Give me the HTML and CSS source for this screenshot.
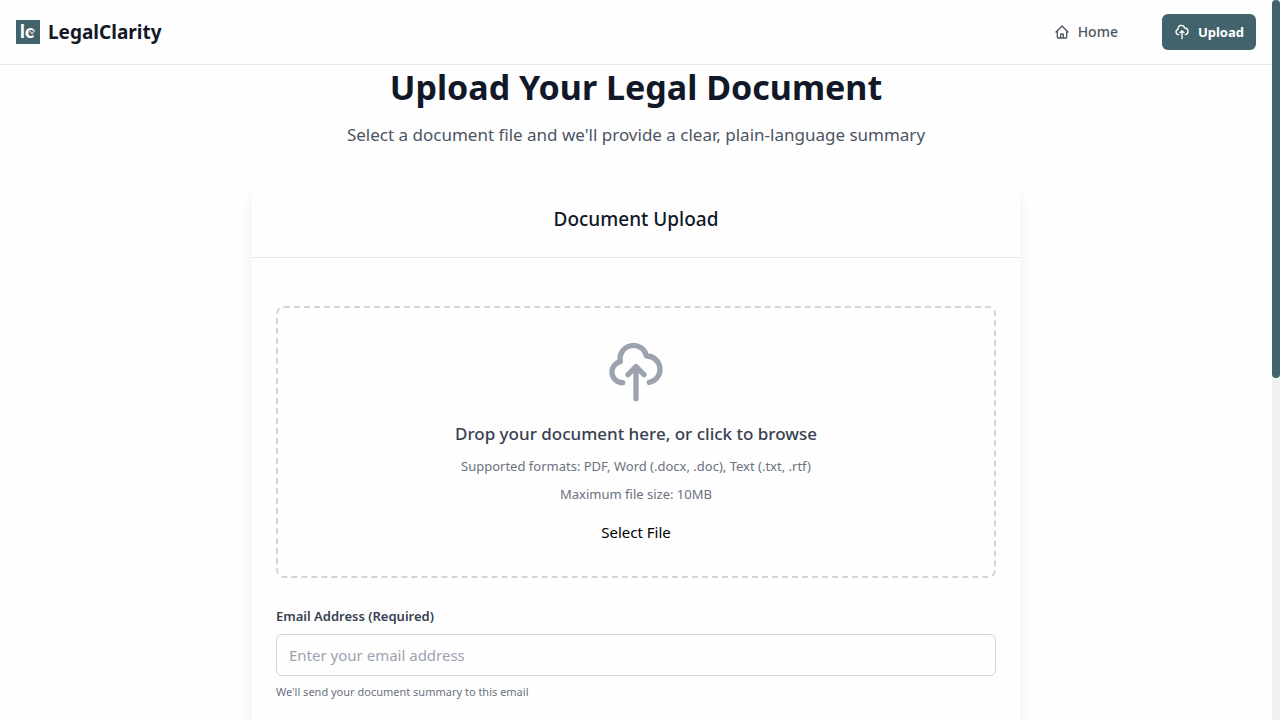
FILE: index.html
```html
<!DOCTYPE html>
<html lang="en">
<head>
    <meta charset="UTF-8">
    <meta name="viewport" content="width=device-width, initial-scale=1.0">
    <title>LegalClarity</title>
    <link rel="stylesheet" href="styles.css">
</head>
<body>
    <header class="navbar">
        <a class="brand" href="#">
            <svg class="brand-logo" viewBox="0 0 24 24" aria-hidden="true">
                <rect width="24" height="24" fill="#42636b"/>
                <text class="logo-text" x="4" y="18">l</text>
                <text class="logo-text" x="9" y="18">c</text>
                <path d="M14 11l2 3 3-4" fill="none" stroke="#fff" stroke-width="1"/>
            </svg>
            <span class="brand-name">LegalClarity</span>
        </a>
        <nav class="nav-links">
            <a class="nav-link" href="#">
                <svg class="icon" viewBox="0 0 24 24" aria-hidden="true">
                    <path d="M3 12l2-2m0 0l7-7 7 7M5 10v10a1 1 0 001 1h3m10-11l2 2m-2-2v10a1 1 0 01-1 1h-3m-6 0a1 1 0 001-1v-4a1 1 0 011-1h2a1 1 0 011 1v4a1 1 0 001 1m-6 0h6"/>
                </svg>
                Home
            </a>
            <a class="nav-link nav-link-active" href="#">
                <svg class="icon" viewBox="0 0 24 24" aria-hidden="true">
                    <path d="M7 16a4 4 0 01-.88-7.903A5 5 0 1115.9 6L16 6a5 5 0 011 9.9M15 13l-3-3m0 0l-3 3m3-3v12"/>
                </svg>
                Upload
            </a>
        </nav>
    </header>

    <main class="page">
        <h1 class="page-title">Upload Your Legal Document</h1>
        <p class="page-intro">Select a document file and we'll provide a clear, plain-language summary</p>

        <section class="card">
            <h2 class="card-title">Document Upload</h2>
            <form class="card-body">
                <div class="dropzone">
                    <svg class="dropzone-icon" viewBox="0 0 24 24" aria-hidden="true">
                        <path d="M7 16a4 4 0 01-.88-7.903A5 5 0 1115.9 6L16 6a5 5 0 011 9.9M15 13l-3-3m0 0l-3 3m3-3v12"/>
                    </svg>
                    <p class="dropzone-title">Drop your document here, or click to browse</p>
                    <p class="dropzone-hint">Supported formats: PDF, Word (.docx, .doc), Text (.txt, .rtf)</p>
                    <p class="dropzone-hint">Maximum file size: 10MB</p>
                    <button class="select-file" type="button">Select File</button>
                </div>
                <label class="field-label" for="email">Email Address (Required)</label>
                <input class="field-input" type="email" id="email" placeholder="Enter your email address">
                <p class="field-hint">We'll send your document summary to this email</p>
            </form>
        </section>
    </main>

    <div class="scroll-track" aria-hidden="true">
        <div class="scroll-thumb"></div>
    </div>
</body>
</html>
```
FILE: styles.css
```css
*{
    margin: 0;
    padding: 0;
    box-sizing: border-box;
}
html{
    scrollbar-width: none;
}
body{
    padding-right: 8px;
    font-family: "Segoe UI", "Noto Sans", "Open Sans", sans-serif;
    font-size: 15px;
    line-height: 24px;
    color: #111827;
    background: #fefefe;
}
a{
    color: inherit;
    text-decoration: none;
}

/* scrollbar */
.scroll-track{
    position: fixed;
    top: 0;
    right: 0;
    bottom: 0;
    z-index: 20;
    width: 8px;
    background: #f1f1f1;
}
.scroll-thumb{
    height: 52.5%;
    border-radius: 4px;
    background: #42636b;
}

/* navbar */
.navbar{
    position: sticky;
    top: 0;
    z-index: 10;
    display: flex;
    justify-content: space-between;
    align-items: center;
    height: 65px;
    padding: 0 16px;
    background: #fefefe;
    border-bottom: 1px solid #e5e7eb;
}
.brand{
    display: flex;
    align-items: center;
    gap: 8px;
}
.brand-logo{
    width: 24px;
    height: 24px;
}
.logo-text{
    font-family: Lato, sans-serif;
    font-size: 19px;
    font-weight: 900;
    fill: #fff;
}
.brand-name{
    font-size: 19px;
    font-weight: 700;
}
.nav-links{
    display: flex;
    gap: 32px;
}
.nav-link{
    display: flex;
    align-items: center;
    gap: 8px;
    padding: 8px 12px;
    border-radius: 6px;
    font-size: 14px;
    font-weight: 500;
    line-height: 20px;
    color: #4b5563;
}
.nav-link-active{
    font-size: 13px;
    font-weight: 700;
    color: #fff;
    background: #42636b;
}
.icon{
    width: 16px;
    height: 16px;
    fill: none;
    stroke: currentColor;
    stroke-width: 2;
    stroke-linecap: round;
    stroke-linejoin: round;
}

/* upload page */
.page{
    max-width: 768px;
    margin: 0 auto;
    text-align: center;
}
.page-title{
    font-size: 34px;
    font-weight: 700;
    line-height: 44px;
}
.page-intro{
    margin-top: 12px;
    font-size: 17px;
    line-height: 28px;
    color: #4b5563;
}
.card{
    margin-top: 32px;
    border-radius: 8px;
    background: #fefefe;
    box-shadow: 0 10px 15px -3px rgba(0, 0, 0, .1);
}
.card-title{
    padding: 24px;
    font-size: 19px;
    font-weight: 500;
    line-height: 28px;
    border-bottom: 1px solid #e5e7eb;
}
.card-body{
    padding: 48px 24px;
}
.dropzone{
    padding: 32px;
    border: 2px dashed #d1d5db;
    border-radius: 8px;
}
.dropzone-icon{
    display: block;
    width: 64px;
    height: 64px;
    margin: 0 auto 16px;
    fill: none;
    stroke: #9ca3af;
    stroke-width: 2;
    stroke-linecap: round;
    stroke-linejoin: round;
}
.dropzone-title{
    margin-bottom: 8px;
    font-size: 17px;
    font-weight: 500;
    line-height: 28px;
    color: #374151;
}
.dropzone-hint{
    margin-bottom: 8px;
    font-size: 13px;
    line-height: 20px;
    color: #6b7280;
}
.select-file{
    margin-top: 8px;
    border: none;
    background: none;
    font: inherit;
    color: #000;
}
.field-label{
    display: block;
    margin: 28px 0 8px;
    font-size: 13px;
    font-weight: 600;
    line-height: 20px;
    text-align: left;
    color: #374151;
}
.field-input{
    width: 100%;
    height: 42px;
    padding: 8px 12px;
    border: 1px solid #d1d5db;
    border-radius: 6px;
    font: inherit;
    background: #fefefe;
}
.field-input::placeholder{
    color: #9ca3af;
}
.field-hint{
    margin-top: 8px;
    font-size: 11px;
    line-height: 16px;
    text-align: left;
    color: #6b7280;
}
```
